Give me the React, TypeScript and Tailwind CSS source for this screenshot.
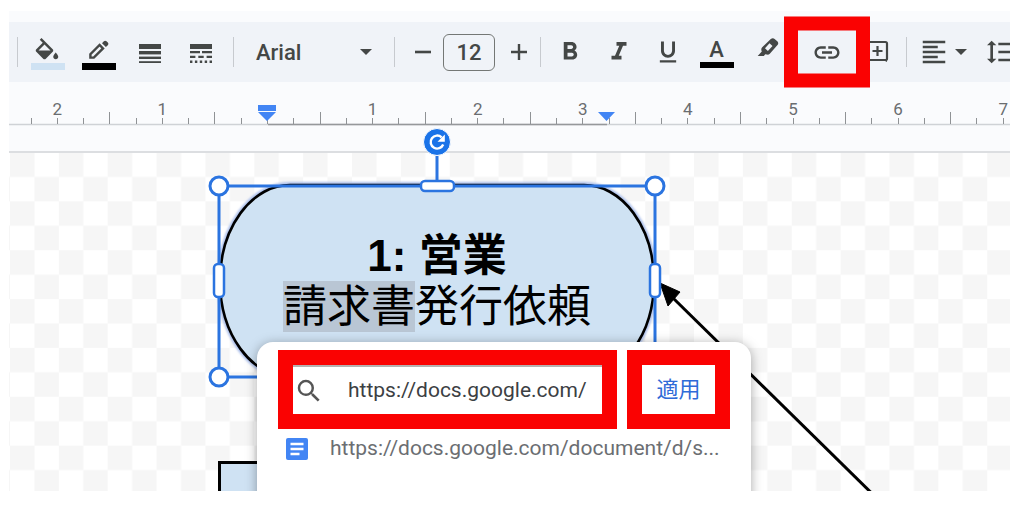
import React, { useState } from 'react'
import {
  MdFormatAlignLeft,
  MdFormatBold,
  MdFormatItalic,
  MdFormatLineSpacing,
  MdFormatUnderlined,
  MdLink,
  MdSearch
} from 'react-icons/md'

function FillIcon() {
  return (
    <svg width="34" height="34" viewBox="0 0 34 34" fill="#444746">
      <path
        transform="translate(1 1) scale(1.25)"
        d="M16.56 8.94L7.62 0 6.21 1.41l2.38 2.38-5.15 5.15c-.59.59-.59 1.54 0 2.12l5.5 5.5c.29.29.68.44 1.06.44s.77-.15 1.06-.44l5.5-5.5c.59-.58.59-1.53 0-2.12zM5.21 10L10 5.21 14.79 10H5.21zM19 11.5s-2 2.17-2 3.5c0 1.1.9 2 2 2s2-.9 2-2c0-1.33-2-3.5-2-3.5z"
      />
      <rect y="26" width="34" height="7" fill="#cfe2f3" />
    </svg>
  )
}

function PencilIcon() {
  return (
    <svg width="34" height="34" viewBox="0 0 34 34" fill="#444746">
      <path d="M8.4 20.6v-3.4l9.2-9.2 3.4 3.4-9.2 9.2z" fill="none" stroke="#444746" strokeWidth="2.4" />
      <path d="M20 6.2l1.9-1.9c.8-.8 1.8-.8 2.6 0l1.3 1.3c.8.8.8 1.8 0 2.6l-1.9 1.9z" />
      <rect y="26" width="34" height="7" fill="#000" />
    </svg>
  )
}

function LineWeightIcon() {
  return (
    <svg width="22" height="20" viewBox="0 0 22 20" fill="#444746">
      <rect width="22" height="5" />
      <rect y="7" width="22" height="3.4" />
      <rect y="12.6" width="22" height="2.4" />
      <rect y="17.2" width="22" height="1.8" />
    </svg>
  )
}

function LineDashIcon() {
  return (
    <svg width="22" height="20" viewBox="0 0 22 20" fill="#444746">
      <rect width="22" height="5" />
      <path d="M0 7h10v2.2H0zM12 7h10v2.2H12zM0 11.8h5.4V14H0zM8.3 11.8h5.4V14H8.3zM16.6 11.8H22V14h-5.4z" />
      <path d="M0 16.6h2.4V19H0zM4.9 16.6h2.4V19H4.9zM9.8 16.6h2.4V19H9.8zM14.7 16.6h2.4V19h-2.4zM19.6 16.6H22V19h-2.4z" />
    </svg>
  )
}

function MarkerIcon() {
  return (
    <svg width="22" height="20" viewBox="0 0 22 20" fill="#444746">
      <path
        fillRule="evenodd"
        d="M5.2 9.2L13.8 1.1c1.1-1 2.600-1.200 3.800-.2l2.700 2.400c1.200 1.100 1.200 2.600.2 3.800l-7.700 8.600c-.8.900-1.900 1.200-3.100.9l-1.500-.3L6.900 18H.7l4.100-4.500c-.7-1.500-.8-3.100.4-4.300zM8 10.300l2.900 2.700 4.600-5-3-2.700z"
      />
    </svg>
  )
}

function CommentIcon() {
  return (
    <svg width="24" height="24" viewBox="0 0 24 24" fill="none" stroke="#444746" strokeWidth="2.2">
      <rect x="3" y="2" width="19" height="18" rx="1.6" />
      <path d="M12.5 6v10M7.5 11h10" />
      <path d="M18 20h4v2z" fill="#444746" stroke="none" />
    </svg>
  )
}

function Caret() {
  return (
    <svg width="12" height="6" viewBox="0 0 12 6" fill="#444746">
      <path d="M0 0h12L6 6z" />
    </svg>
  )
}

function Separator() {
  return <div className="mx-1 h-[30px] w-px shrink-0 bg-[#c7cacf]" />
}

interface ToolButtonProps {
  label: string
  className?: string
  children: React.ReactNode
}

function ToolButton({ label, className = 'w-[49px]', children }: ToolButtonProps) {
  return (
    <button type="button" aria-label={label} className={`flex h-full shrink-0 items-center justify-center ${className}`}>
      {children}
    </button>
  )
}

function Toolbar() {
  const [size, setSize] = useState('12')

  return (
    <div className="flex h-[60px] items-center bg-[#f0f3f8] pl-1 text-[#444746]">
      <Separator />
      <div className="flex h-full shrink-0 items-center pr-[3px]">
        <ToolButton label="Fill color" className="w-[51px] pt-1"><FillIcon /></ToolButton>
        <ToolButton label="Border color" className="w-[51px] pt-1"><PencilIcon /></ToolButton>
        <ToolButton label="Border weight" className="w-[51px] pt-1"><LineWeightIcon /></ToolButton>
        <ToolButton label="Border dash" className="w-[51px] pt-1"><LineDashIcon /></ToolButton>
      </div>
      <Separator />
      <button type="button" className="flex h-full w-[152px] shrink-0 items-center justify-between px-[18px] text-[22px] font-medium">
        Arial
        <Caret />
      </button>
      <Separator />
      <div className="flex h-full shrink-0 items-center pr-px pl-1">
        <ToolButton label="Decrease font size" className="w-10">
          <svg width="16" height="16" viewBox="0 0 16 16"><path d="M0 8h16" stroke="#444746" strokeWidth="2.6" /></svg>
        </ToolButton>
        <input
          aria-label="Font size"
          value={size}
          onChange={(e) => setSize(e.target.value)}
          className="h-[37px] w-[52px] rounded-md border border-[#747775] text-center text-[22px] font-medium"
        />
        <ToolButton label="Increase font size" className="ml-2 w-8">
          <svg width="16" height="16" viewBox="0 0 16 16"><path d="M0 8h16M8 0v16" stroke="#444746" strokeWidth="2.4" /></svg>
        </ToolButton>
      </div>
      <Separator />
      <ToolButton label="Bold"><MdFormatBold size={30} /></ToolButton>
      <ToolButton label="Italic"><MdFormatItalic size={30} /></ToolButton>
      <ToolButton label="Underline"><MdFormatUnderlined size={28} /></ToolButton>
      <ToolButton label="Text color" className="w-[49px] flex-col pt-0.5">
        <span className="text-[22px] leading-6 font-medium">A</span>
        <span className="h-1.5 w-[34px] bg-black" />
      </ToolButton>
      <ToolButton label="Highlight color" className="w-[49px] pb-2 pl-1"><MarkerIcon /></ToolButton>
      <ToolButton label="Insert link" className="relative ml-3 w-[49px]">
        <span className="absolute top-1/2 left-1/2 z-10 flex h-[71px] w-[86px] -translate-x-1/2 -translate-y-1/2 items-center justify-center border-14 border-[#fa0202] bg-[#f0f3f8]">
          <MdLink size={30} />
        </span>
      </ToolButton>
      <ToolButton label="Add comment" className="w-[51px]"><CommentIcon /></ToolButton>
      <Separator />
      <button type="button" aria-label="Align" className="flex h-full shrink-0 items-center gap-1.5 pl-2">
        <MdFormatAlignLeft size={30} />
        <Caret />
      </button>
      <ToolButton label="Line spacing" className="w-[67px]"><MdFormatLineSpacing size={32} /></ToolButton>
    </div>
  )
}

// one inch on the ruler, and where its zero sits
const INCH = 105.1
const ZERO = 258.5

function Ruler() {
  const ticks = Array.from({ length: 60 }, (_, i) => i - 9)
  const labels = [-2, -1, 1, 2, 3, 4, 5, 6, 7]

  return (
    <div className="h-[71px] border-b-2 border-[#dcdee1] bg-[#fafbfd]">
      <svg width="100%" height="44" className="block">
        <path d="M0 42.5h4000" stroke="#cfd2d6" strokeWidth="1.5" />
        <path d="M259 42.5h339" stroke="#96989b" strokeWidth="1.5" />
        {ticks.map((t) => (
          <path
            key={t}
            d={`M${Math.floor(ZERO + (t * INCH) / 4)}.5 ${Math.abs(t) % 4 === 2 ? 30 : 36}V42`}
            stroke="#8f9295"
          />
        ))}
        {labels.map((n) => (
          <text key={n} x={ZERO + n * INCH} y="33" textAnchor="middle" fontSize="17" fill="#6a6d70">
            {Math.abs(n)}
          </text>
        ))}
        <path d="M249 23h18v6h-18zM249 30h18l-9 9zM589 30h17l-8.5 9z" fill="#4285f4" />
      </svg>
    </div>
  )
}

function Drawing() {
  return (
    <svg width="100%" height="100%" className="absolute inset-0 overflow-visible">
      <defs>
        <pattern id="checker" width="48.86" height="48.86" patternUnits="userSpaceOnUse" x="1" y="-.5">
          <path d="M0 0h24.43v24.43H0zM24.43 24.43h24.43v24.43H24.43z" fill="#f6f6f6" />
        </pattern>
        <filter id="soft">
          <feGaussianBlur stdDeviation="1.2" />
        </filter>
      </defs>
      <rect width="100%" height="100%" fill="url(#checker)" />

      <rect x="210.5" y="309.5" width="436" height="80" fill="#cfe2f3" stroke="#000" strokeWidth="3" />

      <rect x="211" y="32" width="434" height="192" rx="70" ry="96" fill="none" stroke="#a9bdea" strokeWidth="6" filter="url(#soft)" />
      <rect x="211" y="32" width="434" height="192" rx="70" ry="96" fill="#cfe2f3" stroke="#000" strokeWidth="2.6" />

      <path d="M663 144l199 195.5" stroke="#000" strokeWidth="3" />
      <path d="M651 130l20 9-12 14z" stroke="#000" strokeWidth="1" />

      <g fill="#fff" stroke="#2b74e0" strokeWidth="3">
        <path d="M428 3v26" />
        <rect x="210" y="33" width="436" height="191" fill="none" />
        <circle cx="210" cy="33" r="9" />
        <circle cx="646" cy="33" r="9" />
        <circle cx="210" cy="224" r="9" />
        <rect x="412" y="28" width="33" height="10" rx="4" strokeWidth="2.5" />
        <rect x="205" y="111" width="10" height="33" rx="4" strokeWidth="2.5" />
        <rect x="641" y="111" width="10" height="33" rx="4" strokeWidth="2.5" />
      </g>
      <circle cx="428" cy="-11" r="13.5" fill="#1a73e8" stroke="#fafbfd" />
      <path d="M434.2 -8.5a6.5 6.5 0 1 1-1.6-7.2" fill="none" stroke="#fff" strokeWidth="2.4" />
      <path d="M435.8 -18.5v7.3h-7.3z" fill="#fff" />
    </svg>
  )
}

function LinkPopup() {
  const [url, setUrl] = useState('https://docs.google.com/')

  return (
    <form
      onSubmit={(e) => e.preventDefault()}
      className="absolute top-[189px] left-[248px] h-60 w-[494px] rounded-t-2xl bg-white px-[21px] pt-2 shadow-[0_2px_12px_rgba(0,0,0,0.35)]"
    >
      <div className="flex gap-2.5">
        <div className="flex h-[79px] flex-1 border-[15px] border-[#fa0202]">
          <label className="flex flex-1 items-center border-t-2 border-[#b5b0b0] pl-px">
            <MdSearch size={30} className="shrink-0 text-[#555]" />
            <input
              aria-label="Link"
              value={url}
              onChange={(e) => setUrl(e.target.value)}
              className="ml-6 w-[248px] bg-transparent text-[21px] text-[#3c4043] outline-none"
            />
          </label>
        </div>
        <button
          type="submit"
          className="h-[79px] w-[103px] border-[15px] border-[#fa0202] text-[22px] text-[#2f6bd8]"
        >
          適用
        </button>
      </div>
      <a href="https://docs.google.com/document/" className="flex h-10 items-center gap-[22px] pl-2 text-[21px] text-[#6b6e72]">
        <svg width="22" height="22" viewBox="0 0 22 22" className="shrink-0">
          <rect width="22" height="22" rx="2" fill="#4285f4" />
          <path d="M4.5 6h13M4.5 11h13M4.5 16h9" stroke="#fff" strokeWidth="2.4" />
        </svg>
        <span className="whitespace-nowrap">https://docs.google.com/document/d/s...</span>
      </a>
    </form>
  )
}

export default function App() {
  return (
    <div className="flex min-h-screen flex-col bg-white pt-[11px] pr-3.5 pb-3.5 pl-[9px] font-[Roboto,'Noto_Sans_CJK_JP',sans-serif]">
      <div className="flex flex-1 flex-col overflow-hidden bg-[#fafbfd] pt-[11px]">
        <Toolbar />
        <Ruler />
        <main className="relative min-h-[338px] flex-1 bg-white">
          <Drawing />
          <div className="absolute top-[77px] left-[210px] w-[436px] text-center font-['Liberation_Sans','Noto_Sans_CJK_JP',sans-serif] text-[44px] leading-[51px] text-black">
            <p className="font-bold">1: 営業</p>
            <p>
              <span className="inline-block bg-[#b9c6d4]">請求書</span>発行依頼
            </p>
          </div>
          <LinkPopup />
        </main>
      </div>
    </div>
  )
}
